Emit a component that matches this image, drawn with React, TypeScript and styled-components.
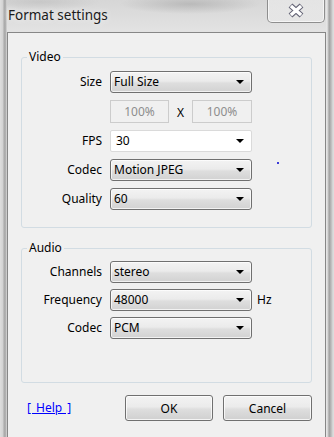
import React from "react";
import styled, { createGlobalStyle } from "styled-components";

const GlobalStyle = createGlobalStyle`
  html, body {
    margin: 0;
    padding: 0;
    background: #d8d8d8;
  }
  body {
    font-family: "Noto Sans", "Open Sans", sans-serif;
    font-size: 12px;
  }
`;

const CloseGlyph = () => (
  <svg width="18" height="15" viewBox="0 0 18 15">
    <path
      d="M3.5 2.5 L14.5 12.5 M14.5 2.5 L3.5 12.5"
      stroke="#626274"
      strokeWidth="5.6"
      fill="none"
    />
    <path
      d="M3.9 2.9 L14.1 12.1 M14.1 2.9 L3.9 12.1"
      stroke="#ffffff"
      strokeWidth="3.4"
      fill="none"
    />
  </svg>
);

const ArrowDown = () => (
  <svg width="8" height="4" viewBox="0 0 8 4">
    <path d="M0 0 H8 L4 4 Z" fill="#000" />
  </svg>
);

type ComboProps = {
  value: string;
  editable?: boolean;
};

const Combo: React.FC<ComboProps> = ({ value, editable }) => (
  <ComboBox $editable={editable}>
    <ComboText>{value}</ComboText>
    <ArrowDown />
  </ComboBox>
);

export default function App() {
  return (
    <>
      <GlobalStyle />
      <Window>
        <TitleBar>
          <Title>Format settings</Title>
          <CloseButton>
            <CloseGlyph />
          </CloseButton>
        </TitleBar>
        <Client>
          <Group $top={17} $padTop={7} $padBottom={17}>
            <Legend>Video</Legend>
            <FormGrid $rowGap={7}>
              <Label>Size</Label>
              <Combo value="Full Size" />
              <span />

              <span />
              <PercentRow>
                <PercentBox $width={59}>100%</PercentBox>
                <Times>X</Times>
                <PercentBox $width={60}>100%</PercentBox>
              </PercentRow>
              <span />

              <Label>FPS</Label>
              <Combo value="30" editable />
              <span />

              <Label>Codec</Label>
              <Combo value="Motion JPEG" />
              <span />

              <Label>Quality</Label>
              <Combo value="60" />
              <span />
            </FormGrid>
            <Speck />
          </Group>

          <Group $top={13} $padTop={6} $padBottom={43}>
            <Legend>Audio</Legend>
            <FormGrid $rowGap={6}>
              <Label>Channels</Label>
              <Combo value="stereo" />
              <span />

              <Label>Frequency</Label>
              <Combo value="48000" />
              <Unit>Hz</Unit>

              <Label>Codec</Label>
              <Combo value="PCM" />
              <span />
            </FormGrid>
          </Group>

          <Footer>
            <HelpLink href="#">[ Help ]</HelpLink>
            <Buttons>
              <Button $width={88}>OK</Button>
              <Button $width={89}>Cancel</Button>
            </Buttons>
          </Footer>
        </Client>
      </Window>
    </>
  );
}

const Window = styled.div`
  width: 334px;
  height: 437px;
  overflow: hidden;
  display: flex;
  flex-direction: column;
  background:
    linear-gradient(
      to right,
      #dedede 0px,
      #d2d2d2 3px,
      #a9a9a9 4px,
      #b3b3b3 6px,
      #e4e4e4 7px,
      transparent 7px,
      transparent 326px,
      #ececec 326px,
      #cfcfcf 328px,
      #9f9f9f 329px,
      #b8b8b8 331px,
      #dcdcdc 333px
    ),
    radial-gradient(ellipse 70px 10px at 190px 4px, rgba(150, 150, 150, 0.45), transparent),
    radial-gradient(ellipse 60px 8px at 40px 2px, rgba(170, 170, 170, 0.35), transparent),
    linear-gradient(#d6d6d6, #e2e2e2 30px, #d9d9d9);
`;

const TitleBar = styled.div`
  height: 32px;
  flex: 0 0 32px;
  display: flex;
  align-items: flex-start;
  justify-content: space-between;
  padding: 0 9px 0 8px;
  box-sizing: border-box;
`;

const Title = styled.div`
  margin-top: 7px;
  font-size: 13.5px;
  line-height: 17px;
  color: #1b1b1b;
  text-shadow: 0 0 6px rgba(255, 255, 255, 0.9);
`;

const CloseButton = styled.div`
  width: 58px;
  height: 24px;
  margin-top: -1px;
  box-sizing: border-box;
  border: 1px solid #8e8e8e;
  border-top: none;
  border-radius: 0 0 5px 5px;
  background: linear-gradient(rgba(255, 255, 255, 0.35), rgba(235, 235, 235, 0.55));
  box-shadow: inset 0 0 0 1px rgba(255, 255, 255, 0.6);
  display: flex;
  align-items: center;
  justify-content: center;
`;

const Client = styled.div`
  flex: 1;
  margin: 0 8px 0 7px;
  border: 1px solid #878787;
  border-bottom: none;
  background: #f0f0f0;
  display: flex;
  flex-direction: column;
  padding: 0 13px;
`;

const Group = styled.fieldset<{ $top: number; $padTop: number; $padBottom: number }>`
  position: relative;
  margin: ${(p) => p.$top}px 0 0 0;
  padding: ${(p) => p.$padTop}px 0 ${(p) => p.$padBottom}px 0;
  border: 1px solid #d2dce3;
  border-radius: 3px;
  min-width: 0;
`;

const Legend = styled.legend`
  margin-left: 5px;
  padding: 0 2px;
  font-size: 12px;
  line-height: 14px;
  color: #000;
`;

const FormGrid = styled.div<{ $rowGap: number }>`
  display: grid;
  grid-template-columns: 80px 142px auto;
  column-gap: 8px;
  row-gap: ${(p) => p.$rowGap}px;
  align-items: center;
`;

const Label = styled.div`
  text-align: right;
  font-size: 12px;
  line-height: 16px;
  color: #000;
`;

const Unit = styled.div`
  margin-left: -3px;
  font-size: 12px;
  line-height: 16px;
  color: #000;
`;

const ComboBox = styled.div<{ $editable?: boolean }>`
  height: 22px;
  box-sizing: border-box;
  display: flex;
  align-items: center;
  justify-content: space-between;
  padding: 0 7px 0 ${(p) => (p.$editable ? 5 : 3)}px;
  border: 1px solid ${(p) => (p.$editable ? "#dadada" : "#707070")};
  border-radius: ${(p) => (p.$editable ? 2 : 3)}px;
  background: ${(p) =>
    p.$editable
      ? "#ffffff"
      : "linear-gradient(#f3f3f3 0%, #ebebeb 45%, #dedede 55%, #d2d2d2 100%)"};
  box-shadow: ${(p) => (p.$editable ? "none" : "inset 0 0 0 1px rgba(255,255,255,0.7)")};
`;

const ComboText = styled.span`
  font-size: 12px;
  line-height: 16px;
  color: #000;
`;

const PercentRow = styled.div`
  height: 23px;
  display: flex;
  align-items: center;
  justify-content: space-between;
`;

const PercentBox = styled.div<{ $width: number }>`
  width: ${(p) => p.$width}px;
  height: 23px;
  box-sizing: border-box;
  border: 1px solid #cccccc;
  background: #f0f0f0;
  color: #8d8d8d;
  font-size: 12px;
  line-height: 21px;
  text-align: center;
`;

const Times = styled.span`
  font-size: 12px;
  line-height: 16px;
  color: #000;
  margin-top: 3px;
`;

const Speck = styled.span`
  position: absolute;
  left: 255px;
  top: 98px;
  width: 2px;
  height: 2px;
  background: #3b3bd8;
`;

const Footer = styled.div`
  margin-top: 12px;
  display: flex;
  align-items: center;
  justify-content: space-between;
  padding-left: 6px;
`;

const HelpLink = styled.a`
  color: #0000ff;
  font-size: 12px;
  line-height: 16px;
  text-decoration: underline;
  word-spacing: 2px;
`;

const Buttons = styled.div`
  display: flex;
  gap: 10px;
`;

const Button = styled.button<{ $width: number }>`
  width: ${(p) => p.$width}px;
  height: 26px;
  border: 1px solid #707070;
  border-radius: 3px;
  background: linear-gradient(#f3f3f3 0%, #ebebeb 45%, #dedede 55%, #d0d0d0 100%);
  box-shadow: inset 0 0 0 1px rgba(255, 255, 255, 0.75);
  font-family: "Noto Sans", "Open Sans", sans-serif;
  font-size: 12px;
  color: #000;
  padding: 0;
`;
